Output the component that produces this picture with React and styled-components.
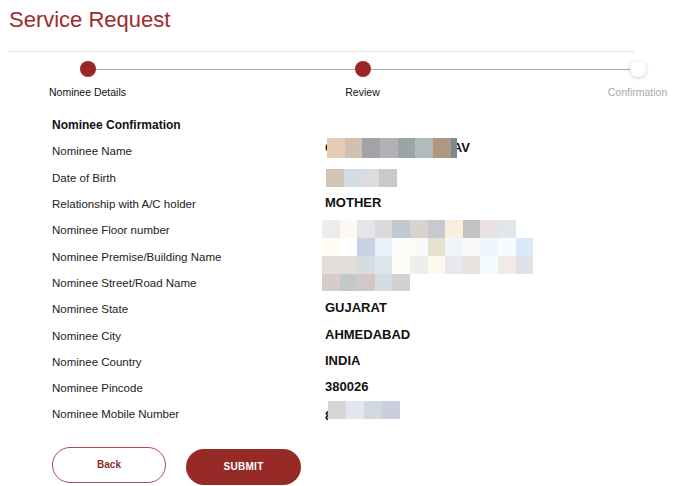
import React from 'react'
import styled, { createGlobalStyle } from 'styled-components'

const GlobalStyle = createGlobalStyle`
  html, body {
    margin: 0;
    padding: 0;
    background: #fff;
  }
  body {
    font-family: "Liberation Sans", Arial, sans-serif;
    overflow: hidden;
  }
`

const steps = [
  { label: 'Nominee Details', done: true },
  { label: 'Review', done: true },
  { label: 'Confirmation', done: false },
]

const nameBlocks = ['#e4cdb4', '#d2bfb3', '#a3a2a8', '#b2b1b6', '#9ba5a8', '#b1bbbb', '#ae9882']
const dobBlocks = ['#d2c4b4', '#d3dce2', '#dcdcde', '#c7c9cc']
const mobileBlocks = ['#d6d6d6', '#e2e7ef', '#d0d9e0', '#c9cfdc']
const addressBlocks = [
  ['#ececec', '#fcf9f4', '#e5e5e5', '#dad8da', '#c0c8d4', '#d8d3cc', '#c6cacf', '#f8f0dc', '#c3c2c1', '#ebe0e0', '#e0e6ea'],
  ['#fffcf4', '#ffffff', '#c5d3e3', '#e8f1f9', '#fdfcf6', '#fafafa', '#e6e0ce', '#eef4f8', '#f8f8f6', '#edf7fe', '#f6fbfe', '#d9e9f9'],
  ['#e2ded8', '#e2dfda', '#d6dcdf', '#dbe5ec', '#fdfcf6', '#eeeeee', '#fcf9ee', '#e7e8ec', '#e6e2de', '#f1fcfe', '#f0ebe8', '#dfe3e7'],
  ['#d6cccc', '#c2c9cb', '#d4c8c6', '#d3dee0', '#d1d1d1'],
]

const App = () => {
  return (
    <Page>
      <GlobalStyle />
      <Title>Service Request</Title>
      <Divider />
      <Stepper>
        {steps.map((s) => (
          <Step key={s.label}>
            <Dot $done={s.done} />
            <StepLabel $muted={!s.done}>{s.label}</StepLabel>
          </Step>
        ))}
      </Stepper>

      <Details>
        <Heading>Nominee Confirmation</Heading>

        <Label>Nominee Name</Label>
        <Value $lift={7}>
          <Sliver $w={2}>C</Sliver>
          <MosaicRow $on>
            {nameBlocks.map((c, i) => (
              <Block key={i} $c={c} $w={17.7} $h={20} />
            ))}
            <Block $c='#7a8a90' $w={6} $h={20} />
          </MosaicRow>
          <Tail>AV</Tail>
        </Value>

        <Label>Date of Birth</Label>
        <Value $lift={0}>
          <MosaicRow style={{ marginLeft: 1 }}>
            {dobBlocks.map((c, i) => (
              <Block key={i} $c={c} $w={17.8} $h={18} />
            ))}
          </MosaicRow>
        </Value>

        <Label>Relationship with A/C holder</Label>
        <Value>MOTHER</Value>

        <Label>Nominee Floor number</Label>
        <AddressMosaic>
          {addressBlocks.map((row, r) => (
            <MosaicRow key={r}>
              {row.map((c, i) => (
                <Block key={i} $c={c} $w={17.6} $h={17.8} />
              ))}
            </MosaicRow>
          ))}
        </AddressMosaic>

        <Label>Nominee Premise/Building Name</Label>
        <Label>Nominee Street/Road Name</Label>

        <Label>Nominee State</Label>
        <Value>GUJARAT</Value>

        <Label>Nominee City</Label>
        <Value>AHMEDABAD</Value>

        <Label>Nominee Country</Label>
        <Value>INDIA</Value>

        <Label>Nominee Pincode</Label>
        <Value>380026</Value>

        <Label>Nominee Mobile Number</Label>
        <Value $lift={2}>
          <Sliver $w={3} $low>8</Sliver>
          <MosaicRow $up>
            {mobileBlocks.map((c, i) => (
              <Block key={i} $c={c} $w={17.9} $h={18} />
            ))}
          </MosaicRow>
        </Value>
      </Details>

      <Actions>
        <BackButton>Back</BackButton>
        <SubmitButton>SUBMIT</SubmitButton>
      </Actions>
    </Page>
  )
}

const Page = styled.div`
  padding: 9px 0 0 8px;
  width: 626px;
`

const Title = styled.h1`
  margin: 0 0 0 1px;
  font-size: 22px;
  line-height: 22px;
  font-weight: 400;
  color: #9b2c2c;
`

const Divider = styled.div`
  margin-top: 20px;
  height: 1px;
  background: #e2e2e2;
  box-shadow: 0 5px 10px -2px rgba(0, 0, 0, 0.07);
`

const Stepper = styled.div`
  display: flex;
  margin: 9px 0 0 -58px;
`

const Step = styled.div`
  position: relative;
  flex: none;
  width: 275px;
  display: flex;
  flex-direction: column;
  align-items: center;

  &:not(:last-child)::after {
    content: '';
    position: absolute;
    top: 8px;
    left: 50%;
    width: 100%;
    height: 1px;
    background: #a9a9a9;
  }
`

const Dot = styled.div`
  position: relative;
  z-index: 1;
  width: 16px;
  height: 16px;
  border-radius: 50%;
  background: ${(p) => (p.$done ? '#9a2727' : '#fff')};
  box-shadow: ${(p) => (p.$done ? 'none' : '0 1px 4px rgba(0, 0, 0, 0.2)')};
`

const StepLabel = styled.div`
  margin-top: 9px;
  font-size: 10.5px;
  line-height: 12px;
  color: ${(p) => (p.$muted ? '#a8a8a8' : '#111')};
`

const Details = styled.div`
  display: grid;
  grid-template-columns: 273px 1fr;
  grid-auto-rows: 26.3px;
  align-items: center;
  margin: 14px 0 0 44px;
`

const Heading = styled.div`
  grid-column: 1 / -1;
  font-size: 12px;
  font-weight: 700;
  color: #111;
`

const Label = styled.div`
  grid-column: 1;
  font-size: 11.5px;
  color: #222;
`

const Value = styled.div`
  grid-column: 2;
  display: flex;
  align-items: center;
  margin-bottom: ${(p) => (p.$lift === undefined ? 3 : p.$lift)}px;
  font-size: 13px;
  font-weight: 700;
  color: #111;
`

const Sliver = styled.span`
  display: inline-block;
  width: ${(p) => p.$w}px;
  overflow: hidden;
  margin-top: ${(p) => (p.$low ? 4 : 0)}px;
`

const Tail = styled.span`
  margin-left: -4px;
`

const MosaicRow = styled.div`
  display: flex;
  position: ${(p) => (p.$on ? 'relative' : 'static')};
  z-index: ${(p) => (p.$on ? 1 : 'auto')};
  margin-top: ${(p) => (p.$up ? -6 : 0)}px;
`

const Block = styled.span`
  flex: none;
  width: ${(p) => p.$w}px;
  height: ${(p) => p.$h}px;
  background: ${(p) => p.$c};
`

const AddressMosaic = styled.div`
  grid-column: 2;
  grid-row: span 3;
  align-self: start;
  margin: 3px 0 0 -3px;
  display: flex;
  flex-direction: column;
`

const Actions = styled.div`
  display: flex;
  align-items: flex-start;
  gap: 20px;
  margin: 19px 0 0 44px;
`

const BackButton = styled.button`
  width: 114px;
  height: 36px;
  border-radius: 18px;
  border: 1px solid #b04a4a;
  background: #fff;
  color: #8a2f2f;
  font-family: "Liberation Sans", Arial, sans-serif;
  font-size: 10px;
  font-weight: 700;
  cursor: pointer;
`

const SubmitButton = styled.button`
  margin-top: 2px;
  width: 115px;
  height: 36px;
  border-radius: 18px;
  border: none;
  background: #952a27;
  color: #fff;
  font-family: "Liberation Sans", Arial, sans-serif;
  font-size: 10px;
  font-weight: 700;
  letter-spacing: 0.3px;
  cursor: pointer;
`

export default App
